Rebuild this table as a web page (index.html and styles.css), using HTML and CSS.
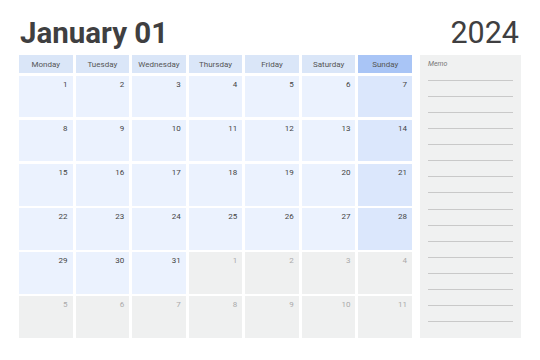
FILE: index.html
```html
<!DOCTYPE html>
<html>
<head>
<meta charset="utf-8">
<link rel="stylesheet" href="styles.css">
</head>
<body>
<div class="page">
  <header class="top">
    <h1 class="title">January 01</h1>
    <div class="year">2024</div>
  </header>
  <main class="body">
    <div class="cal">
      <div class="hd">Monday</div>
      <div class="hd">Tuesday</div>
      <div class="hd">Wednesday</div>
      <div class="hd">Thursday</div>
      <div class="hd">Friday</div>
      <div class="hd">Saturday</div>
      <div class="hd sun">Sunday</div>

      <div class="c">1</div><div class="c">2</div><div class="c">3</div><div class="c">4</div><div class="c">5</div><div class="c">6</div><div class="c sun">7</div>
      <div class="c">8</div><div class="c">9</div><div class="c">10</div><div class="c">11</div><div class="c">12</div><div class="c">13</div><div class="c sun">14</div>
      <div class="c">15</div><div class="c">16</div><div class="c">17</div><div class="c">18</div><div class="c">19</div><div class="c">20</div><div class="c sun">21</div>
      <div class="c">22</div><div class="c">23</div><div class="c">24</div><div class="c">25</div><div class="c">26</div><div class="c">27</div><div class="c sun">28</div>
      <div class="c">29</div><div class="c">30</div><div class="c">31</div><div class="c out">1</div><div class="c out">2</div><div class="c out">3</div><div class="c out">4</div>
      <div class="c out">5</div><div class="c out">6</div><div class="c out">7</div><div class="c out">8</div><div class="c out">9</div><div class="c out">10</div><div class="c out">11</div>
    </div>
    <aside class="memo">
      <div class="memo-label">Memo</div>
      <div class="lines">
        <span></span><span></span><span></span><span></span>
        <span></span><span></span><span></span><span></span>
        <span></span><span></span><span></span><span></span>
        <span></span><span></span><span></span><span></span>
      </div>
    </aside>
  </main>
</div>
</body>
</html>
```
FILE: styles.css
```css
* { box-sizing: border-box; }
html, body { margin: 0; padding: 0; background: #fff; }
.page {
  width: 540px;
  height: 360px;
  padding: 0 19px;
  font-family: Roboto, "Liberation Sans", sans-serif;
  color: #444;
}
.top {
  height: 55px;
  display: flex;
  justify-content: space-between;
  align-items: flex-start;
  padding-top: 16px;
}
.title {
  margin: 0 0 0 1px;
  font-size: 29.5px;
  line-height: 34px;
  font-weight: 700;
  color: #3f3f41;
  letter-spacing: 0;
}
.year {
  font-size: 30.5px;
  line-height: 34px;
  font-weight: 400;
  color: #3f3f41;
  margin-right: 2px;
}
.body {
  display: flex;
  gap: 8px;
  height: 283px;
}
.cal {
  width: 393px;
  display: grid;
  grid-template-columns: repeat(7, 1fr);
  grid-template-rows: 18px repeat(6, 1fr);
  column-gap: 3px;
  row-gap: 2.5px;
}
.hd {
  background: #dae6f8;
  font-size: 8px;
  color: #555;
  display: flex;
  align-items: center;
  justify-content: center;
}
.hd.sun { background: #a9c5f6; }
.c {
  background: #ebf2fe;
  font-size: 8px;
  color: #444;
  text-align: right;
  padding: 4px 5px 0 0;
  line-height: 10px;
}
.c.sun { background: #dbe7fc; }
.c.out { background: #eff0f0; color: #aaa; }
.memo {
  flex: 1;
  background: #f0f1f1;
  padding: 4px 8px 0 8px;
}
.memo-label {
  font-size: 7px;
  font-style: italic;
  color: #777;
  line-height: 10px;
}
.lines {
  display: flex;
  flex-direction: column;
  gap: 15.13px;
  margin-top: 10.5px;
}
.lines span {
  display: block;
  height: 1px;
  background: #c9c9c9;
}
```
